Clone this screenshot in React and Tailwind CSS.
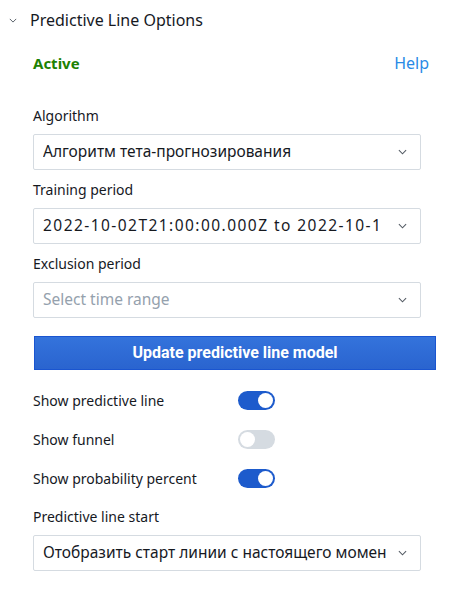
import { useState } from 'react'

const FONT = "font-['Noto_Sans',sans-serif]"

function Chevron({ className }) {
  return (
    <svg viewBox="0 0 10 6" className={className} fill="none" stroke="currentColor" strokeWidth="1.2">
      <path d="M1 1l4 4 4-4" />
    </svg>
  )
}

function SelectBox({ value, placeholder, wide }) {
  return (
    <div className="flex items-center h-[36px] w-[388px] pl-[9px] pr-[10px] border border-[#d5dbe1] rounded-[2px] bg-white">
      <div className={`flex-1 min-w-0 ${wide ? 'pr-[8px]' : ''}`}>
        <div
          className={`overflow-hidden whitespace-nowrap text-[15.5px] ${wide ? 'tracking-[1.45px]' : ''} ${value ? 'text-[#16191f]' : 'text-[#95a1ad]'}`}
        >
          {value || placeholder}
        </div>
      </div>
      <Chevron className="w-[9px] h-[6px] ml-[12px] mr-[3px] text-[#545b64]" />
    </div>
  )
}

function Field({ label, children, mb = 'mb-[10px]' }) {
  return (
    <div className={mb}>
      <div className="text-[14px] text-[#16191f] mb-[9px] leading-[19px]">{label}</div>
      {children}
    </div>
  )
}

function Toggle({ on, onClick }) {
  return (
    <button
      onClick={onClick}
      className={`relative w-[37px] h-[19px] rounded-full ${on ? 'bg-[#1d5bcc]' : 'bg-[#d5dbe1]'}`}
    >
      <span
        className={`absolute top-[2px] w-[15px] h-[15px] rounded-full bg-white ${on ? 'left-[20px]' : 'left-[2px]'}`}
      />
    </button>
  )
}

export default function App() {
  const [toggles, setToggles] = useState({ line: true, funnel: false, percent: true })
  const flip = key => setToggles(t => ({ ...t, [key]: !t[key] }))

  const rows = [
    ['line', 'Show predictive line'],
    ['funnel', 'Show funnel'],
    ['percent', 'Show probability percent'],
  ]

  return (
    <div className={`w-[454px] h-[602px] bg-white ${FONT}`}>
      <div className="flex items-center h-[40px] pl-[8px]">
        <Chevron className="w-[8px] h-[5px] text-[#545b64] ml-[1px]" />
        <span className="ml-[13px] text-[16px] text-[#16191f]">Predictive Line Options</span>
      </div>

      <div className="pl-[33px] pr-[24px]">
        <div className="flex items-center justify-between h-[46px]">
          <span className="text-[15px] font-bold text-[#1d8102]">Active</span>
          <span className="text-[16px] text-[#2a8ae6] mr-[1px]">Help</span>
        </div>

        <div className="pt-[20px]">
          <Field label="Algorithm">
            <SelectBox value="Алгоритм тета-прогнозирования" />
          </Field>
          <Field label="Training period">
            <SelectBox wide value="2022-10-02T21:00:00.000Z to 2022-10-13T21:00:00.000Z" />
          </Field>
          <Field label="Exclusion period" mb="mb-[18px]">
            <SelectBox placeholder="Select time range" />
          </Field>
        </div>

        <button className="w-[402px] h-[34px] ml-[1px] bg-gradient-to-b from-[#3473dc] to-[#2a64cf] border border-[#1a55d0] text-white text-[16px] font-bold font-['Roboto',sans-serif]">
          Update predictive line model
        </button>

        <div className="mt-[21px] flex flex-col gap-[21px]">
          {rows.map(([key, label]) => (
            <div key={key} className="flex items-center h-[18px]">
              <span className="w-[205px] text-[14px] text-[#16191f]">{label}</span>
              <Toggle on={toggles[key]} onClick={() => flip(key)} />
            </div>
          ))}
        </div>

        <div className="mt-[20px]">
          <Field label="Predictive line start">
            <SelectBox value="Отобразить старт линии с настоящего момента" />
          </Field>
        </div>
      </div>
    </div>
  )
}
